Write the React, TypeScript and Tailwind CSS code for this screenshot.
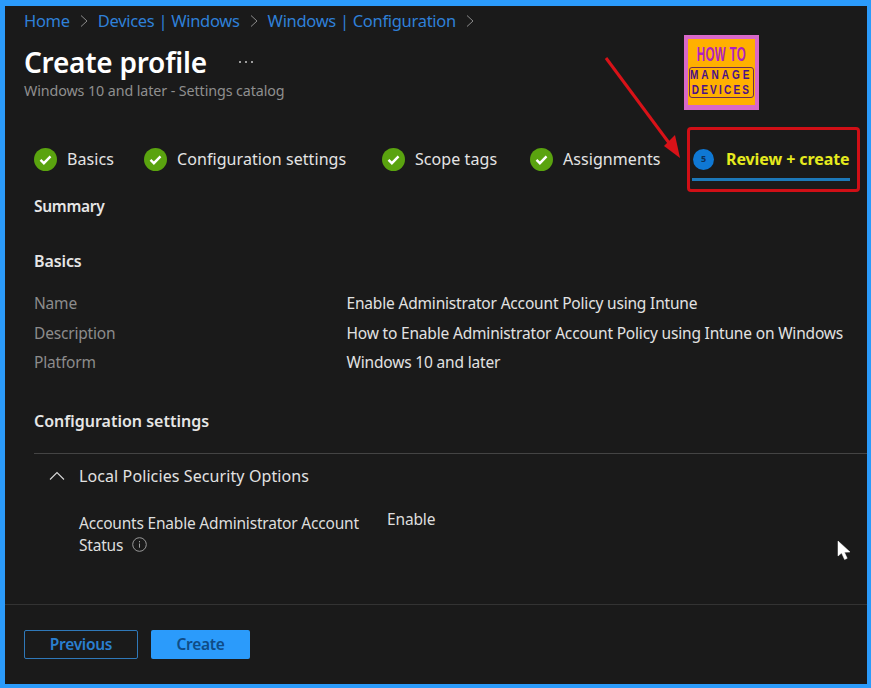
import React from "react";

const Check = () => (
  <svg width="23" height="23" viewBox="0 0 23 23" className="shrink-0">
    <circle cx="11.5" cy="11.5" r="11.5" fill="#5aa30f" />
    <path d="M6.5 11.8l3.4 3.4 6.6-6.8" fill="none" stroke="#ffffff" strokeWidth="2.4" />
  </svg>
);

const Chevron = () => (
  <svg width="12" height="14" viewBox="0 0 12 14" className="shrink-0 mx-[8px]">
    <path d="M3 1.5L9 7l-6 5.5" fill="none" stroke="#8a8a8a" strokeWidth="1" />
  </svg>
);

const Step = ({ label, className }: { label: string; className: string }) => (
  <div className={`flex items-center gap-[10px] ${className}`}>
    <Check />
    <span className="text-[16px] tracking-[0.07px] text-[#e4e4e4] whitespace-nowrap">{label}</span>
  </div>
);

const Row = ({ k, v }: { k: string; v: string }) => (
  <div className="flex items-center h-[29.6px] text-[15.5px] tracking-[-0.18px]">
    <span className="w-[312.5px] text-[#8c8c8c]">{k}</span>
    <span className="text-[#e2e2e2] whitespace-nowrap">{v}</span>
  </div>
);

export default function App() {
  return (
    <div className="relative w-[871px] h-[688px] overflow-hidden bg-[#1a1a1a] border-l-[5px] border-t-[6px] border-r-[4px] border-b-[4px] border-[#2b9bfb] flex flex-col font-['Noto_Sans',sans-serif]">
      <nav className="flex items-center h-[30px] pl-[19px] text-[16.5px] tracking-[-0.3px] text-[#2f80d8]">
        <span>Home</span>
        <Chevron />
        <span>Devices | Windows</span>
        <Chevron />
        <span>Windows | Configuration</span>
        <Chevron />
      </nav>

      <div className="flex items-center h-[32px] mt-[10px] pl-[19px]">
        <h1 className="text-[28px] font-semibold text-white tracking-[-0.25px]">Create profile</h1>
        <span className="ml-[32px] flex gap-[4px]">
          <span className="w-[2px] h-[2px] rounded-full bg-[#c8c8c8]" />
          <span className="w-[2px] h-[2px] rounded-full bg-[#c8c8c8]" />
          <span className="w-[2px] h-[2px] rounded-full bg-[#c8c8c8]" />
        </span>
      </div>
      <div className="h-[18px] mt-[4px] pl-[19px] text-[14.3px] leading-[18px] tracking-[-0.1px] text-[#8f8f8f]">
        Windows 10 and later - Settings catalog
      </div>

      <div className="flex items-center h-[30px] mt-[44px] pl-[29px]">
        <Step label="Basics" className="w-[110px]" />
        <Step label="Configuration settings" className="w-[238px]" />
        <Step label="Scope tags" className="w-[148px]" />
        <Step label="Assignments" className="w-[162px]" />
        <div className="relative flex items-center h-[30px] w-[158px] pl-[1px]">
          <span className="flex items-center justify-center w-[21px] h-[21px] rounded-full bg-[#0f78d4] text-[9px] font-bold text-[#0c3058]">5</span>
          <span className="ml-[12px] text-[16px] font-bold tracking-[-0.08px] text-[#e5ea1e] whitespace-nowrap">Review + create</span>
          <div className="absolute left-0 right-0 top-[34px] h-[2.5px] bg-[#1c78b8]" />
        </div>
      </div>

      <div className="h-[20px] mt-[22px] pl-[29px] text-[15.5px] leading-[20px] font-semibold tracking-[-0.3px] text-[#e6e6e6]">Summary</div>
      <div className="h-[20px] mt-[35px] pl-[29px] text-[16px] leading-[20px] font-semibold tracking-[-0.1px] text-[#e6e6e6]">Basics</div>

      <div className="mt-[18px] pl-[29px]">
        <Row k="Name" v="Enable Administrator Account Policy using Intune" />
        <Row k="Description" v="How to Enable Administrator Account Policy using Intune on Windows" />
        <Row k="Platform" v="Windows 10 and later" />
      </div>

      <div className="h-[20px] mt-[33px] pl-[29px] text-[16px] leading-[20px] font-semibold tracking-[0px] text-[#e6e6e6]">Configuration settings</div>

      <div className="h-[1px] mt-[22px] ml-[29px] bg-[#444444]" />

      <div className="flex items-center h-[20px] mt-[12px] pl-[44px]">
        <svg width="16" height="10" viewBox="0 0 16 10" className="shrink-0">
          <path d="M1 8.5L8 1.5l7 7" fill="none" stroke="#d8d8d8" strokeWidth="1.1" />
        </svg>
        <span className="ml-[14px] text-[16px] tracking-[0.1px] text-[#e2e2e2] whitespace-nowrap">Local Policies Security Options</span>
      </div>

      <div className="flex mt-[26px] pl-[74px]">
        <div className="w-[308px] text-[15.5px] leading-[22px] tracking-[-0.2px] text-[#dedede]">
          <div className="whitespace-nowrap">Accounts Enable Administrator Account</div>
          <div className="flex items-center">
            Status
            <svg width="15" height="15" viewBox="0 0 15 15" className="ml-[9px] shrink-0">
              <circle cx="7.5" cy="7.5" r="6.8" fill="none" stroke="#9a9a9a" strokeWidth="1" />
              <path d="M7.5 6.5v4.2M7.5 4v1.3" stroke="#9a9a9a" strokeWidth="1" />
            </svg>
          </div>
        </div>
        <div className="-mt-[4px] text-[15.5px] leading-[22px] tracking-[-0.15px] text-[#dedede]">Enable</div>
      </div>

      <div className="h-[1px] mt-[48px] bg-[#333333]" />

      <div className="flex items-center gap-[13px] mt-[25px] pl-[19px]">
        <button className="flex items-center justify-center w-[114px] h-[29px] rounded-[2px] border border-[#2f78b8] text-[15.5px] font-semibold tracking-[-0.3px] text-[#2a7fd0]">Previous</button>
        <button className="flex items-center justify-center w-[99px] h-[29px] rounded-[2px] bg-[#2b9bfb] text-[15.5px] font-semibold tracking-[-0.3px] text-[#0f4c86]">Create</button>
      </div>

      {/* Annotations over the screenshot */}
      <div className="absolute left-[679px] top-[29px] w-[75px] h-[75px] bg-[#ffb000] border-[4px] border-b-[5px] border-[#d868c8] flex flex-col items-center overflow-hidden font-['Liberation_Sans',sans-serif]">
        <div className="mt-[3px] text-[20px] leading-[24px] font-bold tracking-[0.5px] text-[#b01fc0] whitespace-nowrap scale-x-[0.58]">HOW TO</div>
        <div className="mt-[1px] w-[65px] h-[31px] shrink-0 rounded-[3px] border-[1.5px] border-[#6a2a50] flex flex-col items-center justify-center text-[#4a0f8a] font-bold text-[12px] leading-[14.5px]">
          <span className="whitespace-nowrap tracking-[3.5px] scale-x-[0.84] scale-y-[1.04]">MANAGE</span>
          <span className="whitespace-nowrap tracking-[2.6px] scale-x-[0.84] scale-y-[1.04]">DEVICES</span>
        </div>
      </div>

      <div className="absolute left-[682px] top-[121px] w-[173px] h-[65px] rounded-[4px] border-[3px] border-[#d00f16]" />

      <svg width="90" height="110" viewBox="0 0 90 110" className="absolute left-[590px] top-[50px]">
        <path d="M11 2L80 95" stroke="#d81218" strokeWidth="3" fill="none" />
        <path d="M85 102L69 90L80 79Z" fill="#d81218" />
      </svg>

      <svg width="16" height="22" viewBox="0 0 16 22" className="absolute left-[832px] top-[534px]">
        <path d="M1 1L1 16L4.6 13L7.6 19.5L10.2 18.3L7.4 12.2L13 12Z" fill="#ffffff" stroke="#ffffff" strokeWidth="0.5" />
      </svg>
    </div>
  );
}
